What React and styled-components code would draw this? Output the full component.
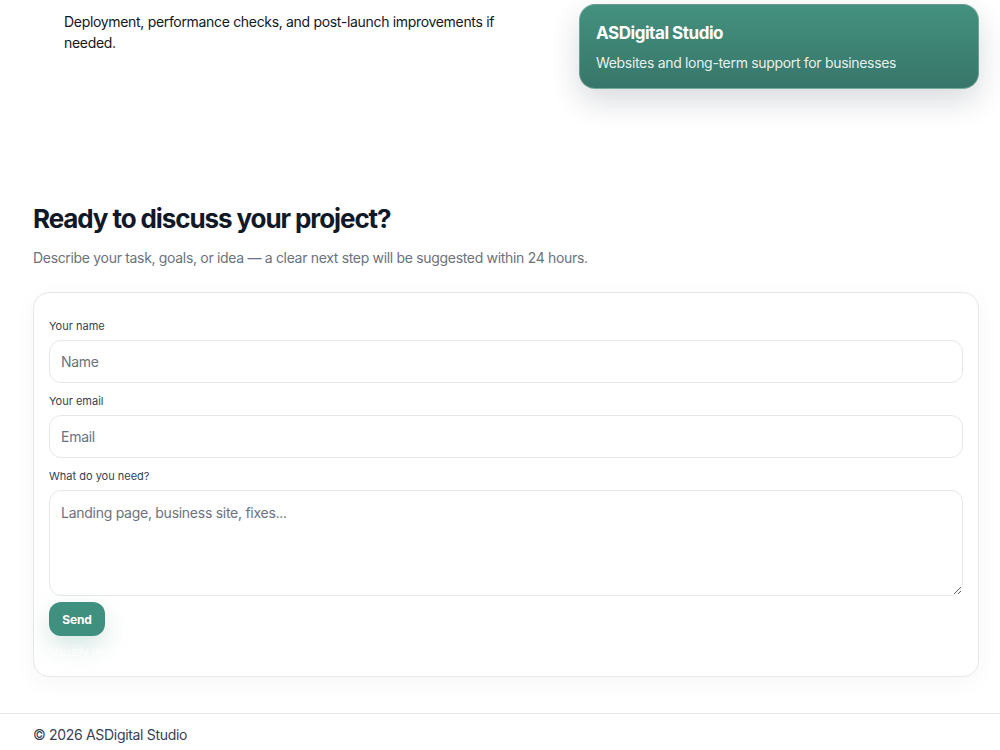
import React from "react";
import styled, { createGlobalStyle } from "styled-components";

const Global = createGlobalStyle`
  html, body { margin: 0; padding: 0; background: #ffffff; }
  body {
    font-family: Inter, "Noto Sans", "Liberation Sans", sans-serif;
    color: #111827;
    letter-spacing: -0.02em;
    -webkit-font-smoothing: antialiased;
  }
  * { box-sizing: border-box; }
`;

const Container = styled.div`
  width: 946px;
  margin-left: 33px;
`;

const TopGrid = styled.div`
  display: grid;
  grid-template-columns: 1fr 400px;
  gap: 32px;
  padding-top: 4px;
  align-items: start;
`;

const StepText = styled.p`
  margin: 7px 0 0 31px;
  max-width: 450px;
  font-size: 14px;
  line-height: 21px;
  color: #111827;
`;

const BrandCard = styled.div`
  border-radius: 16px;
  padding: 16px 16px 15px;
  background: linear-gradient(180deg, #44917f 0%, #37766a 100%);
  border: 1px solid rgba(255, 255, 255, 0.25);
  box-shadow: 0 12px 30px rgba(15, 23, 42, 0.16);
  color: #ffffff;
`;

const BrandTitle = styled.div`
  font-size: 17px;
  line-height: 24px;
  font-weight: 700;
  letter-spacing: -0.45px;
`;

const BrandSub = styled.div`
  margin-top: 8px;
  font-size: 14px;
  line-height: 20px;
  color: rgba(255, 255, 255, 0.9);
`;

const ContactSection = styled.section`
  padding-top: 113px;
  padding-bottom: 36px;
`;

const Heading = styled.h2`
  margin: 0;
  font-size: 26px;
  line-height: 34px;
  font-weight: 700;
  letter-spacing: -1.1px;
  color: #111827;
`;

const Lead = styled.p`
  margin: 11px 0 0;
  font-size: 14px;
  line-height: 22px;
  color: #6b7280;
`;

const FormCard = styled.form`
  margin-top: 23px;
  border: 1px solid #e5e7eb;
  border-radius: 16px;
  padding: 25px 15px 16px;
  background: #ffffff;
  box-shadow: 0 6px 24px rgba(15, 23, 42, 0.04);
  display: flex;
  flex-direction: column;
`;

const Label = styled.label`
  display: block;
  font-size: 11px;
  line-height: 16px;
  letter-spacing: 0;
  color: #374151;
  margin-top: ${(p) => (p.$first ? "0" : "10px")};
  margin-bottom: 6px;
`;

const fieldBase = `
  width: 100%;
  border: 1px solid #e5e7eb;
  border-radius: 12px;
  background: #ffffff;
  font-family: Inter, "Noto Sans", "Liberation Sans", sans-serif;
  font-size: 14px;
  letter-spacing: -0.27px;
  color: #111827;
  outline: none;
  &::placeholder { color: #6b7280; }
`;

const Input = styled.input`
  ${fieldBase}
  height: 43px;
  padding: 0 11px;
`;

const TextArea = styled.textarea`
  ${fieldBase}
  height: 106px;
  padding: 12px 11px;
  line-height: 20px;
  resize: vertical;
  display: block;
`;

const SendButton = styled.button`
  margin-top: 6px;
  align-self: flex-start;
  height: 34px;
  width: 56px;
  padding: 0;
  border: none;
  border-radius: 12px;
  background: #40907f;
  color: #ffffff;
  font-family: Inter, "Noto Sans", "Liberation Sans", sans-serif;
  font-size: 12px;
  font-weight: 700;
  letter-spacing: -0.1px;
  box-shadow: 0 10px 24px rgba(64, 144, 127, 0.22);
  cursor: pointer;
`;

const Note = styled.div`
  margin-top: 8px;
  font-size: 12px;
  line-height: 16px;
  color: #ffffff;
  opacity: 0.85;
`;

const Footer = styled.footer`
  border-top: 1px solid #e5e7eb;
  padding: 11px 0 8px;
`;

const FooterText = styled.div`
  font-size: 14px;
  line-height: 20px;
  color: #374151;
`;

export default function App() {
  return (
    <>
      <Global />
      <Container>
        <TopGrid>
          <StepText>
            Deployment, performance checks, and post-launch improvements if
            needed.
          </StepText>
          <BrandCard>
            <BrandTitle>ASDigital Studio</BrandTitle>
            <BrandSub>Websites and long-term support for businesses</BrandSub>
          </BrandCard>
        </TopGrid>

        <ContactSection>
          <Heading>Ready to discuss your project?</Heading>
          <Lead>
            Describe your task, goals, or idea — a clear next step will be
            suggested within 24 hours.
          </Lead>
          <FormCard onSubmit={(e) => e.preventDefault()}>
            <Label $first htmlFor="name">Your name</Label>
            <Input id="name" placeholder="Name" />
            <Label htmlFor="email">Your email</Label>
            <Input id="email" placeholder="Email" />
            <Label htmlFor="need">What do you need?</Label>
            <TextArea id="need" placeholder="Landing page, business site, fixes..." />
            <SendButton type="submit">Send</SendButton>
            <Note>Usually reply within 24 hours</Note>
          </FormCard>
        </ContactSection>
      </Container>
      <Footer>
        <Container>
          <FooterText>© 2026 ASDigital Studio</FooterText>
        </Container>
      </Footer>
    </>
  );
}
